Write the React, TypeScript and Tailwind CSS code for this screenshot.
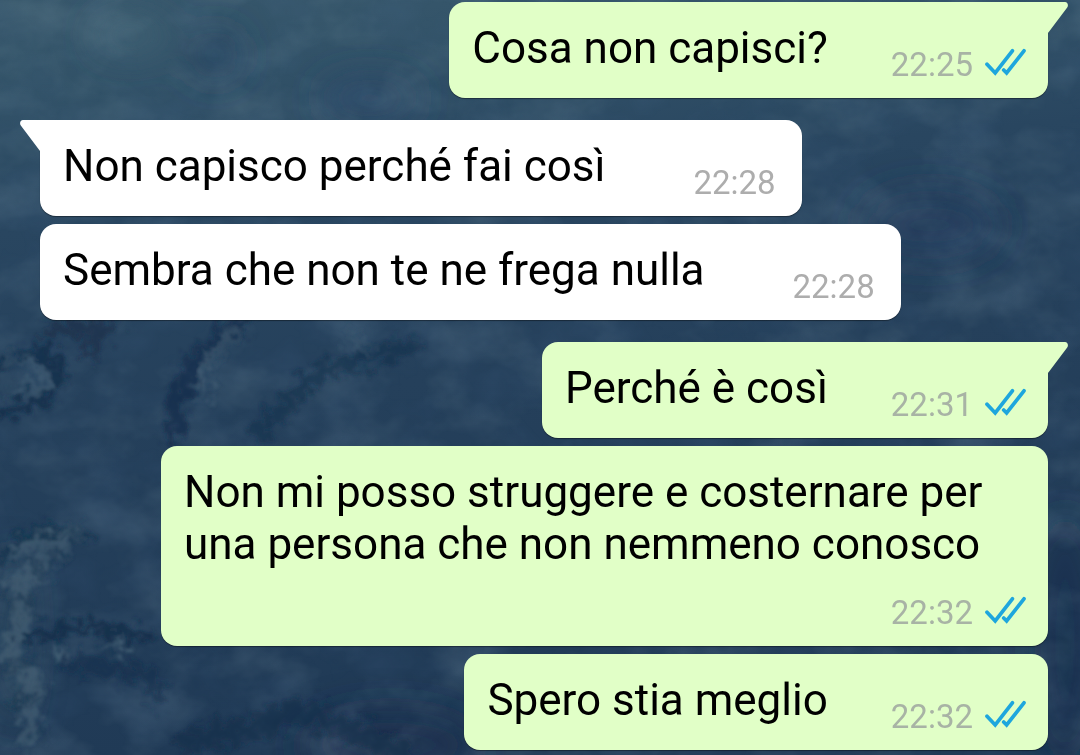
import React from "react";

type Message = {
  text: string;
  time: string;
  sent: boolean;
  tail?: boolean;
  long?: boolean;
};

const messages: Message[] = [
  { text: "Cosa non capisci?", time: "22:25", sent: true, tail: true },
  { text: "Non capisco perché fai così", time: "22:28", sent: false, tail: true },
  { text: "Sembra che non te ne frega nulla", time: "22:28", sent: false },
  { text: "Perché è così", time: "22:31", sent: true, tail: true },
  {
    text: "Non mi posso struggere e costernare per una persona che non nemmeno conosco",
    time: "22:32",
    sent: true,
    long: true,
  },
  { text: "Spero stia meglio", time: "22:32", sent: true },
];

function Wallpaper() {
  return (
    <svg
      className="absolute inset-0 h-full w-full"
      viewBox="0 0 1080 755"
      preserveAspectRatio="none"
      aria-hidden="true"
    >
      <defs>
        <linearGradient id="sea" x1="0" y1="0" x2="0.15" y2="1">
          <stop offset="0" stopColor="#38586c" />
          <stop offset="0.13" stopColor="#325268" />
          <stop offset="0.3" stopColor="#294660" />
          <stop offset="0.55" stopColor="#25405b" />
          <stop offset="1" stopColor="#203a56" />
        </linearGradient>
        <filter id="cloud" x="0" y="0" width="100%" height="100%">
          <feTurbulence type="fractalNoise" baseFrequency="0.016 0.022" numOctaves={4} seed={8} />
          <feColorMatrix values="0 0 0 0 0.36  0 0 0 0 0.5  0 0 0 0 0.56  1.8 0 0 0 -0.75" />
        </filter>
        <filter id="shade" x="0" y="0" width="100%" height="100%">
          <feTurbulence type="fractalNoise" baseFrequency="0.016 0.022" numOctaves={4} seed={21} />
          <feColorMatrix values="0 0 0 0 0.08  0 0 0 0 0.16  0 0 0 0 0.3  1.8 0 0 0 -0.75" />
        </filter>
        <filter id="rough" x="-30%" y="-30%" width="160%" height="160%">
          <feGaussianBlur in="SourceGraphic" stdDeviation="3" result="s" />
          <feTurbulence type="fractalNoise" baseFrequency="0.09" numOctaves={3} seed={4} result="n" />
          <feDisplacementMap in="s" in2="n" scale={34} xChannelSelector="R" yChannelSelector="G" />
          <feGaussianBlur stdDeviation="1" />
        </filter>
        <filter id="soft" x="-50%" y="-50%" width="200%" height="200%">
          <feGaussianBlur stdDeviation="18" />
        </filter>
      </defs>
      <rect width="1080" height="755" fill="url(#sea)" />
      <g filter="url(#soft)">
        <ellipse cx="215" cy="55" rx="26" ry="24" fill="#25425f" opacity="0.8" />
        <ellipse cx="370" cy="98" rx="50" ry="20" fill="#294765" opacity="0.8" />
        <ellipse cx="130" cy="35" rx="40" ry="22" fill="#47677a" opacity="0.5" />
        <ellipse cx="930" cy="225" rx="70" ry="35" fill="#243c5b" opacity="0.7" />
        <ellipse cx="1065" cy="640" rx="30" ry="130" fill="#182f4d" opacity="0.6" />
        <ellipse cx="390" cy="745" rx="90" ry="35" fill="#182e4b" opacity="0.7" />
        <ellipse cx="14" cy="640" rx="16" ry="90" fill="#3b596b" opacity="0.5" />
      </g>
      <rect width="1080" height="755" filter="url(#cloud)" opacity="0.17" />
      <rect width="1080" height="755" filter="url(#shade)" opacity="0.17" />
      <g filter="url(#rough)" fill="none" strokeLinecap="round">
        <path d="M0 365L40 350L62 372L46 398L0 412" stroke="#122b47" strokeWidth="12" opacity="0.8" />
        <path d="M50 330L105 328L90 352" stroke="#172c49" strokeWidth="15" opacity="0.7" />
        <path d="M5 360L36 362L52 388L20 386" stroke="#4f6b7e" strokeWidth="6" opacity="0.6" />
        <path d="M240 322L196 362L176 398L174 432" stroke="#132b48" strokeWidth="18" opacity="0.7" />
        <path d="M235 330L204 365L202 396" stroke="#4f6a7f" strokeWidth="6" opacity="0.6" />
        <path d="M410 345L320 372L296 395L258 432" stroke="#162f4c" strokeWidth="16" opacity="0.65" />
        <path d="M352 335L370 355" stroke="#456176" strokeWidth="6" opacity="0.5" />
        <path d="M0 562L15 538L58 530L85 536" stroke="#132f4b" strokeWidth="10" opacity="0.8" />
        <path d="M14 548L64 540L38 570L18 582L22 622L6 655L34 682L28 742" stroke="#4d6979" strokeWidth="16" opacity="0.5" />
        <path d="M24 560L46 572M10 600L30 596M8 668L34 660M12 706L36 696M48 548L60 560" stroke="#1b3750" strokeWidth="7" opacity="0.8" />
        <path d="M24 638L80 626L145 636" stroke="#122d49" strokeWidth="12" opacity="0.8" />
        <path d="M68 661L150 676L160 698" stroke="#142e4b" strokeWidth="15" opacity="0.6" />
        <path d="M58 652L59 654M118 645L119 647" stroke="#4b6779" strokeWidth="12" opacity="0.8" />
        <path d="M190 742L270 724L295 710L350 730L400 752" stroke="#182b49" strokeWidth="24" opacity="0.6" />
      </g>
    </svg>
  );
}

function ReadTicks() {
  return (
    <svg
      className="mb-[9px] h-7 w-[42px] shrink-0"
      viewBox="0 0 42 28"
      fill="none"
      stroke="#1ea6dd"
      strokeWidth="3.7"
      strokeLinecap="round"
      role="img"
      aria-label="Letto"
    >
      <path d="M2 16.2L10.2 25L27.4 2.8M18.7 22L21.6 25L39 2.8" />
    </svg>
  );
}

function Tail({ sent }: { sent: boolean }) {
  return sent ? (
    <svg className="absolute top-0 left-full -ml-px h-8 w-[21px]" viewBox="0 0 21 32" aria-hidden="true">
      <path d="M0 0H18C20.6 0 21.8 3.2 20.2 5.4L1 31V32H0Z" fill="#e1ffc7" />
    </svg>
  ) : (
    <svg className="absolute top-0 right-full -mr-px h-8 w-[21px]" viewBox="0 0 21 32" aria-hidden="true">
      <path d="M21 0H3C.4 0-.8 3.2.8 5.4L20 31V32H21Z" fill="#fff" />
    </svg>
  );
}

function Bubble({ message, first }: { message: Message; first: boolean }) {
  const { text, time, sent, tail, long } = message;
  return (
    <li
      className={[
        "relative flex max-w-[887px] rounded-2xl shadow-[0_1px_1px_rgba(0,0,0,0.4)]",
        sent ? "self-end bg-[#e1ffc7] pr-[21px] pl-[23px]" : "self-start bg-white pr-[26px] pl-[23px]",
        tail ? (sent ? "rounded-tr-none" : "rounded-tl-none") : "",
        first ? "" : tail ? "mt-[22px]" : "mt-2",
        long ? "flex-col" : sent ? "gap-[63px]" : "gap-[88px]",
      ].join(" ")}
    >
      {tail && <Tail sent={sent} />}
      <p className={`pt-5 text-[44px] leading-[52px] ${long ? "pb-[23px]" : "pb-6"}`}>{text}</p>
      <div className="flex items-end gap-3 self-end pb-[13px]">
        <time className={`text-[33px] leading-10 ${sent ? "text-[#a8b3a5]" : "text-[#adadad]"}`}>{time}</time>
        {sent && <ReadTicks />}
      </div>
    </li>
  );
}

export default function App() {
  return (
    <main className="relative min-h-screen overflow-hidden bg-[#25415c] font-[Roboto,sans-serif] text-black">
      <Wallpaper />
      <ol className="relative flex flex-col pt-[2px] pr-8 pb-1 pl-10">
        {messages.map((message, index) => (
          <Bubble key={index} message={message} first={index === 0} />
        ))}
      </ol>
    </main>
  );
}
